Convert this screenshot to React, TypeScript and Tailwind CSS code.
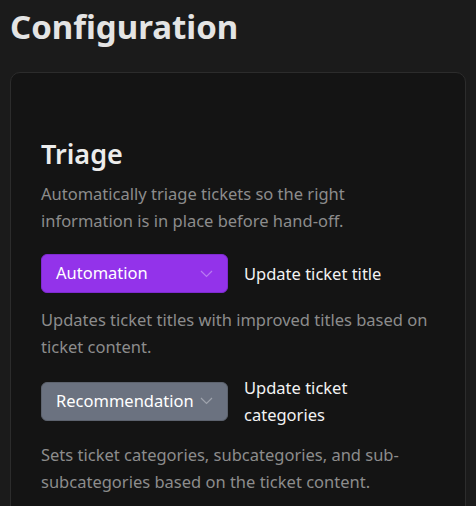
import React from 'react';

function Chevron() {
  return (
    <svg width="13" height="8" viewBox="0 0 13 8" fill="none" className="shrink-0">
      <path d="M1 1l5.5 5.5L12 1" stroke="white" strokeOpacity="0.35" strokeWidth="1.2" />
    </svg>
  );
}

interface RowProps {
  mode: string;
  tone: 'purple' | 'gray';
  label: string;
  description: string;
  first?: boolean;
}

function SettingRow({ mode, tone, label, description, first }: RowProps) {
  const selectClass =
    tone === 'purple'
      ? 'bg-[#9333ea] border-[#7e2bd0]'
      : 'bg-[#6b7280] border-[#5d636e]';
  return (
    <div className={first ? 'mt-[20px]' : 'mt-[14px]'}>
      <div className="flex items-center gap-[16px]">
        <div
          className={`flex h-[39px] w-[187px] shrink-0 items-center justify-between rounded-[6px] border pl-[14px] pr-[14px] text-[16.5px] text-white ${selectClass}`}
        >
          <span>{mode}</span>
          <Chevron />
        </div>
        <span className="w-[170px] text-[16.5px] leading-[27px] text-[#f2f2f2]">{label}</span>
      </div>
      <p className="mt-[13px] text-[16.5px] leading-[27px] text-[#8c8c8c]">{description}</p>
    </div>
  );
}

export default function App() {
  return (
    <div
      className="min-h-screen bg-[#1b1b1b] px-[10px] pt-[3px]"
      style={{ fontFamily: '"Noto Sans", "Open Sans", sans-serif' }}
    >
      <h1 className="text-[33px] font-bold leading-[47px] text-[#e4e4e4]">Configuration</h1>
      <div className="mt-[22px] rounded-[10px] border border-[#2c2c2c] bg-[#141414] pb-[30px] pl-[30px] pr-[28px] pt-[64px]">
        <h2 className="text-[27px] font-semibold leading-[34px] text-[#ececec]">Triage</h2>
        <p className="mt-[9px] text-[16.5px] leading-[27px] text-[#8c8c8c]">
          Automatically triage tickets so the right information is in place before hand-off.
        </p>
        <SettingRow
          first
          mode="Automation"
          tone="purple"
          label="Update ticket title"
          description="Updates ticket titles with improved titles based on ticket content."
        />
        <SettingRow
          mode="Recommendation"
          tone="gray"
          label="Update ticket categories"
          description="Sets ticket categories, subcategories, and sub-subcategories based on the ticket content."
        />
      </div>
    </div>
  );
}
